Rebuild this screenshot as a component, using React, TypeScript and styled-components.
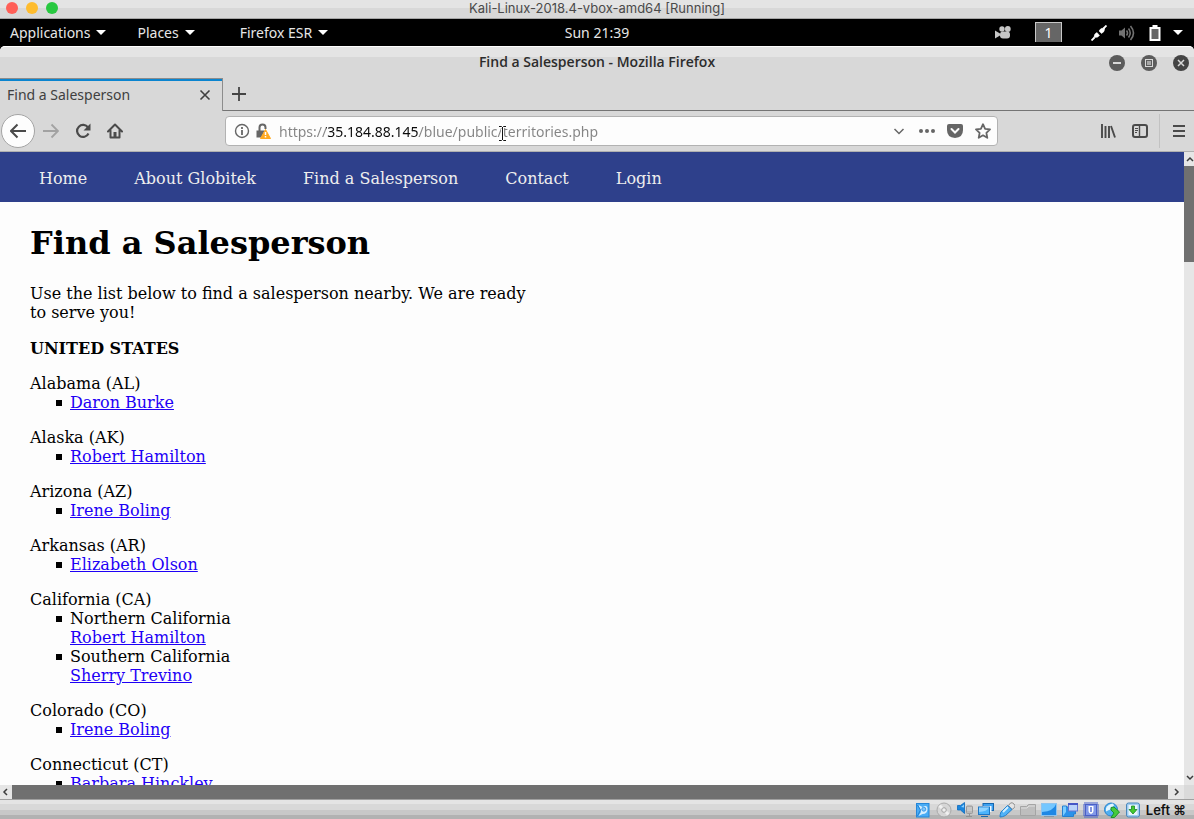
import React from "react";
import styled, { createGlobalStyle } from "styled-components";

const uiFont = `"Noto Sans", "Open Sans", sans-serif`;
const macFont = `Inter, Roboto, sans-serif`;

const GlobalStyle = createGlobalStyle`
  *, *::before, *::after { box-sizing: border-box; }
  body { margin: 0; background: #d8d8d8; }
  button { border: 0; padding: 0; background: none; color: inherit; font: inherit; }
  svg { display: block; flex: none; }
`;

const Shell = styled.div`
  display: flex;
  flex-direction: column;
  height: 100vh;
  overflow: hidden;
  font-family: ${uiFont};
  font-size: 14px;
`;

/* Host window title bar */
const HostBar = styled.header`
  display: grid;
  grid-template-columns: 1fr auto 1fr;
  align-items: center;
  flex: none;
  height: 19px;
  padding-bottom: 2px;
  border-bottom: 1px solid #a6a6a6;
  background: linear-gradient(#e4e4e4 8px, #d8d8d8 8px);
  color: #4a4a4a;
  font-family: ${macFont};
  font-size: 13px;
  line-height: 16px;
`;
const Lights = styled.div`
  display: flex;
  gap: 8px;
  padding-left: 6px;
`;
const Light = styled.button<{ $color: string }>`
  width: 12px;
  height: 12px;
  border-radius: 50%;
  background: ${(p) => p.$color};
`;

/* Desktop panel */
const Panel = styled.div`
  display: grid;
  grid-template-columns: 1fr auto 1fr;
  align-items: center;
  flex: none;
  height: 27px;
  background: #000;
  color: #e6e6e6;
  line-height: 20px;
`;
const PanelMenus = styled.div`
  display: flex;
  padding-left: 10px;
`;
const PanelMenu = styled.button<{ $gap?: number }>`
  display: flex;
  align-items: center;
  gap: 6px;
  margin-right: ${(p) => p.$gap ?? 0}px;
`;
const Caret = styled.span`
  border: 5px solid transparent;
  border-top-color: #fff;
  border-bottom-width: 0;
`;
const PanelTray = styled.div`
  display: flex;
  align-items: center;
  justify-content: flex-end;
  gap: 12px;
  padding-right: 11px;
`;
const PowerMenu = styled.button`
  display: flex;
  align-items: center;
  gap: 10px;
`;
const Workspace = styled.button`
  width: 27px;
  height: 21px;
  margin: 0 17px 0 12px;
  border: 1px solid #c8c8c8;
  background: #666;
  color: #fff;
  line-height: 19px;
`;

/* Browser window chrome */
const TitleBar = styled.div`
  display: grid;
  grid-template-columns: 1fr auto 1fr;
  align-items: center;
  flex: none;
  height: 32px;
  border-top: 1px solid #fff;
  border-radius: 5px 5px 0 0;
  background: linear-gradient(#e4e4e4 10px, #d8d8d8 10px);
  box-shadow: 0 -4px 0 #000;
  color: #2c2c2c;
  font-family: "Open Sans", sans-serif;
  font-weight: 600;
`;
const WindowTitle = styled.span`
  grid-column: 2;
  padding-bottom: 2px;
`;
const WindowButtons = styled.div`
  display: flex;
  justify-content: flex-end;
  gap: 16px;
  padding-right: 5px;
`;
const TabStrip = styled.div`
  display: flex;
  flex: none;
  height: 33px;
  background: #d8d8d8;
`;
const Tab = styled.div`
  display: flex;
  align-items: center;
  justify-content: space-between;
  width: 223px;
  padding: 0 11px 0 7px;
  border-top: 1px solid #8c8c8c;
  border-right: 1px solid #8c8c8c;
  box-shadow: inset 0 2px #0a84cf;
  color: #404040;
`;
const TabLabel = styled.span`
  padding-bottom: 2px;
`;
const TabRest = styled.div`
  display: flex;
  align-items: center;
  flex: 1;
  padding-left: 8px;
  border-bottom: 1px solid #747474;
`;
const Toolbar = styled.div`
  display: flex;
  align-items: center;
  flex: none;
  height: 41px;
  border-bottom: 1px solid #b0b0b0;
  background: #d8d8d8;
  color: #4a4a4a;
`;
const IconButton = styled.button<{ $width?: number }>`
  display: flex;
  align-items: center;
  justify-content: center;
  width: ${(p) => p.$width ?? 32}px;
  height: 28px;
`;
const BackButton = styled(IconButton)`
  height: 34px;
  margin-left: 1px;
  border: 1px solid #a4a4a4;
  border-radius: 50%;
  background: #fdfdfd;
`;
const Divider = styled.span`
  width: 1px;
  height: 34px;
  margin: 0 3px;
  background: #c2c2c2;
`;
const UrlField = styled.form`
  position: relative;
  display: flex;
  align-items: center;
  flex: 1;
  height: 30px;
  margin: 0 94px;
  padding-left: 8px;
  border: 1px solid #b2b2b2;
  border-radius: 4px;
  background: #fdfdfd;
  color: #666;
`;
const SiteIcons = styled.span`
  display: flex;
  gap: 5px;
  margin-right: 8px;
`;
/* The host part of the address is darker than its scheme and path. */
const UrlInput = styled.input`
  flex: 1;
  min-width: 0;
  height: 26px;
  padding: 0;
  border: 0;
  outline: 0;
  background: linear-gradient(90deg, #848484 47px, #0c0c0c 47px 140px, #848484 140px);
  background-clip: text;
  -webkit-background-clip: text;
  -webkit-text-fill-color: transparent;
  font-family: ${uiFont};
  font-size: 14px;
`;
const Pointer = styled.svg`
  position: absolute;
  left: 272px;
  top: 8px;
`;

/* Web page */
const Viewport = styled.div`
  display: grid;
  grid-template: minmax(0, 1fr) 14px / minmax(0, 1fr) 10px;
  flex: 1;
  min-height: 0;
`;
const Page = styled.main`
  overflow: hidden;
  background: #fdfdfd;
  color: #000;
  font-family: "DejaVu Serif", serif;
  font-size: 16px;
  line-height: 19px;
`;
const Nav = styled.nav`
  display: flex;
  align-items: center;
  gap: 47px;
  height: 50px;
  padding: 2px 39px 0;
  background: #2e408b;
`;
const NavLink = styled.a`
  color: #eee;
  text-decoration: none;
`;
const Content = styled.div`
  padding: 0 30px;
`;
const Heading = styled.h1`
  margin: 22px 0;
  font-size: 32px;
  line-height: 38px;
`;
const Intro = styled.p`
  width: 500px;
  max-width: 100%;
  margin: 0 0 17px;
`;
const Country = styled.h2`
  margin: 0 0 16px;
  font-size: 16px;
  line-height: 19px;
`;
const Territory = styled.section`
  margin-bottom: 16px;
`;
const People = styled.ul`
  margin: 0;
  padding-left: 40px;
  list-style: none;
`;
const Person = styled.li`
  &::before {
    content: "";
    display: inline-block;
    width: 6px;
    height: 6px;
    margin: 0 8px 2px -14px;
    background: #000;
  }
`;
const PersonLink = styled.a`
  color: #1e00f6;
`;
const VScroll = styled.div`
  display: flex;
  flex-direction: column;
  overflow: hidden;
  background: #e6e6e6;
`;
const VThumb = styled.div`
  height: 96px;
  margin-bottom: auto;
  background: #707070;
`;
const HScroll = styled.div`
  display: flex;
  background: #e6e6e6;
`;
const HThumb = styled.div`
  flex: 1;
  background: #707070;
`;
const ScrollButton = styled.button<{ $w: number }>`
  display: flex;
  align-items: center;
  justify-content: center;
  width: ${(p) => p.$w}px;
  height: 14px;
  color: #3c3c3c;
`;
const Corner = styled.div`
  background: #dadada;
`;

/* Virtual machine status bar */
const StatusBar = styled.footer`
  display: flex;
  align-items: center;
  justify-content: flex-end;
  gap: 5px;
  flex: none;
  height: 20px;
  padding-right: 8px;
  border-top: 1px solid #a0a0a0;
  background: linear-gradient(#e4e4e4 4px, #d8d8d8 4px 10px, #c8c8c8 10px 15px, #b2b2b2 15px);
  color: #111;
  font-family: ${macFont};
  font-size: 13px;
  font-weight: 600;
  line-height: 18px;
`;

type IconProps = { w?: number; h?: number; children: React.ReactNode; sw?: number };
const Icon = ({ w = 16, h = 16, sw = 2, children }: IconProps) => (
  <svg width={w} height={h} viewBox={`0 0 ${w} ${h}`} fill="none" stroke="currentColor" strokeWidth={sw} aria-hidden="true">
    {children}
  </svg>
);

const WindowButton = ({ label, fill, children }: { label: string; fill: string; children: React.ReactNode }) => (
  <button aria-label={label}>
    <svg width="16" height="16" viewBox="0 0 16 16" stroke="#d8d8d8" fill="none">
      <circle cx="8" cy="8" r="8" fill={fill} stroke="none" />
      {children}
    </svg>
  </button>
);

const StatusIcons = () => (
  <>
    <svg width="16" height="16" viewBox="0 0 16 16">
      <rect x="1.5" y="1.5" width="12.5" height="13.5" fill="#49acf5" stroke="#2586d8" />
      <path d="M3.500 3l4 2q5-3 5 2t-5 5l-4 2 2.500-4z" fill="#d6eeff" />
      <circle cx="8.800" cy="7.200" r="2" fill="#7cc4fb" stroke="#2b8de0" strokeWidth=".8" />
      <path d="M2.500 3l3 5-3 6" stroke="#1c7fd4" fill="none" />
    </svg>
    <svg width="16" height="16" viewBox="0 0 16 16">
      <circle cx="8" cy="8" r="7" fill="#d6d6d6" stroke="#aaa" />
      <path d="M8 8L3.500 3.500M8 8l4.500 4.500" stroke="#f0f0f0" strokeWidth="3" />
      <circle cx="8" cy="8" r="2.300" fill="#eee" stroke="#a2a2a2" />
    </svg>
    <svg width="16" height="16" viewBox="0 0 16 16">
      <path d="M.5 3.500h3l4-3v11l-4-3.500h-3z" fill="#1c86dd" stroke="#0d6abc" strokeWidth=".8" />
      <path d="M4 5l3-2.500v3z" fill="#8bd0ff" />
      <rect x="9.500" y="4" width="6" height="7.500" rx="1" fill="#b8b8b8" stroke="#9a9a9a" />
      <path d="M10 6h5M10 8h5" stroke="#d8d8d8" />
      <path d="M12.500 12v3M9 14.500h6" stroke="#929292" fill="none" />
    </svg>
    <svg width="16" height="16" viewBox="0 0 16 16">
      <rect x="5" y="1.500" width="10.500" height="7" fill="#3ea3f2" stroke="#1767af" />
      <rect x="4.500" y="4" width="9" height="6" fill="#eef7ff" />
      <rect x=".5" y="5" width="11" height="7.500" fill="#4bb4fb" stroke="#1e76c4" />
      <path d="M1 5.500h10q-2 4-10 4.500z" fill="#90d3ff" />
      <path d="M3 14.500h7" stroke="#1767af" />
    </svg>
    <svg width="16" height="16" viewBox="0 0 16 16">
      <path d="M9.500 3.500l2-2.500q1.500-1 3.500 1t.5 3.500l-2.500 2z" fill="#e4e4e4" stroke="#8e8e8e" />
      <path d="M2 10l6.500-6.500 4.500 4-6.500 6q-3 1.500-5.500 1.500 0-3 1-5z" fill="#4fb2f8" stroke="#2480cc" />
      <path d="M4 10l5-5" stroke="#d3efff" strokeWidth="1.800" />
    </svg>
    <svg width="16" height="16" viewBox="0 0 16 16">
      <path d="M.5 13.500v-9h6l2-2h7v11z" fill="#bebebe" stroke="#a4a4a4" />
      <path d="M1 6h6l2-2h6" stroke="#dedede" fill="none" />
    </svg>
    <svg width="16" height="16" viewBox="0 0 16 16">
      <rect x=".5" y="1.500" width="15" height="12" fill="#1e88e5" stroke="#8dc3ee" />
      <path d="M1 2h14q-2 7-14 8z" fill="#74c7ff" />
      <path d="M3 14.500h10" stroke="#8597a8" />
    </svg>
    <svg width="16" height="16" viewBox="0 0 16 16">
      <path d="M.5 14.500V4h4v1h9v7h-2v2.500z" fill="#2a92ea" stroke="#2480d0" />
      <path d="M1 14V4.500h3V10z" fill="#7accff" />
      <rect x="6.500" y="1.500" width="9" height="7.500" fill="#b9d3fa" stroke="#6674d0" />
      <path d="M6 2h10" stroke="#4657c6" strokeWidth="2" />
    </svg>
    <svg width="16" height="16" viewBox="0 0 16 16">
      <rect x="1.500" y="1.500" width="13" height="13" fill="none" stroke="#4a63cc" strokeWidth="3" strokeDasharray="1 1" />
      <rect x="2.500" y="2.500" width="11" height="11" fill="#8299e8" stroke="#4a5fc8" />
      <path d="M5.500 4v5q0 2 2.500 3 2.500-1 2.500-3V4z" fill="#fff" />
      <path d="M8 5v5" stroke="#5a70d4" strokeWidth="1.500" />
    </svg>
    <svg width="16" height="16" viewBox="0 0 16 16">
      <circle cx="7" cy="7.500" r="6.500" fill="#50aff1" stroke="#2a83cc" />
      <path d="M2 6q2-4 7-4.500l1 2-4 4-4 2z" fill="#e2f5ff" />
      <path d="M7 5.500l3-.5 5.500 5-5 5.500H7L10 11 7 8z" fill="#45cb3c" stroke="#158a26" strokeWidth=".9" />
    </svg>
    <svg width="16" height="16" viewBox="0 0 16 16">
      <rect x="1.500" y="1" width="13" height="14" rx="2" fill="#9fcdf2" stroke="#4a86ba" />
      <rect x="3.500" y="3" width="9" height="10" fill="#eaf5f9" />
      <path d="M6.500 4h3v3.500H12L8 12 4 7.500h2.500z" fill="#45c92e" stroke="#168528" strokeWidth=".8" />
    </svg>
  </>
);

type Entry = { region?: string; person: string };
const territories: { name: string; entries: Entry[] }[] = [
  { name: "Alabama (AL)", entries: [{ person: "Daron Burke" }] },
  { name: "Alaska (AK)", entries: [{ person: "Robert Hamilton" }] },
  { name: "Arizona (AZ)", entries: [{ person: "Irene Boling" }] },
  { name: "Arkansas (AR)", entries: [{ person: "Elizabeth Olson" }] },
  {
    name: "California (CA)",
    entries: [
      { region: "Northern California", person: "Robert Hamilton" },
      { region: "Southern California", person: "Sherry Trevino" },
    ],
  },
  { name: "Colorado (CO)", entries: [{ person: "Irene Boling" }] },
  { name: "Connecticut (CT)", entries: [{ person: "Barbara Hinckley" }] },
];

const navItems = ["Home", "About Globitek", "Find a Salesperson", "Contact", "Login"];

export default function App() {
  return (
    <Shell>
      <GlobalStyle />
      <HostBar>
        <Lights>
          <Light $color="#ff5f57" aria-label="Close" />
          <Light $color="#febc2e" aria-label="Minimize" />
          <Light $color="#28c840" aria-label="Zoom" />
        </Lights>
        <span>Kali-Linux-2018.4-vbox-amd64 [Running]</span>
      </HostBar>

      <Panel>
        <PanelMenus>
          <PanelMenu $gap={31}>Applications <Caret /></PanelMenu>
          <PanelMenu $gap={45}>Places <Caret /></PanelMenu>
          <PanelMenu>Firefox ESR <Caret /></PanelMenu>
        </PanelMenus>
        <span>Sun 21:39</span>
        <PanelTray>
          <svg width="16" height="14" viewBox="0 0 16 14" fill="#c6c6c6">
            <path d="M0 4.500l5 3v2l-5 3z" />
            <circle cx="7" cy="3" r="2.700" />
            <circle cx="12.800" cy="3" r="2.900" />
            <rect x="5" y="5.500" width="10" height="7" rx="3" />
          </svg>
          <Workspace>1</Workspace>
          <svg width="16" height="16" viewBox="0 0 16 16" fill="#fff" stroke="#fff">
            <path d="M.5 15.500l3-3M12.500 3.500l3-3" strokeWidth="1.800" />
            <path d="M3 12.500q0-4 3-5l2.500 3q-1.500 2.500-5.500 2zM8 6q1.500-3.500 5.500-3 .5 4-3 5.500z" strokeWidth=".5" />
          </svg>
          <svg width="16" height="16" viewBox="0 0 16 16" fill="none" stroke="#727272" strokeWidth="1.600">
            <path d="M0 5.500h2.500L6 2.500v11L2.500 10.500H0z" fill="#727272" stroke="none" />
            <path d="M7.500 5.500q2 2.500 0 5M9.500 3.500q3.500 4.500 0 9M11.500 1q6 7 0 14" />
          </svg>
          <PowerMenu aria-label="System menu">
            <svg width="16" height="16" viewBox="0 0 16 16">
              <path d="M5.500 0h5v2h3v14h-11V2h3z" fill="#fff" />
              <path d="M4.500 4h7v10h-7z" fill="#666" />
            </svg>
            <Caret />
          </PowerMenu>
        </PanelTray>
      </Panel>

      <TitleBar>
        <WindowTitle>Find a Salesperson - Mozilla Firefox</WindowTitle>
        <WindowButtons>
          <WindowButton label="Minimize window" fill="#5c5c5c"><path d="M4 8h8" strokeWidth="2" /></WindowButton>
          <WindowButton label="Maximize window" fill="#5c5c5c">
            <rect x="4.500" y="4.500" width="7" height="7" /><rect x="6" y="6" width="4" height="4" fill="#a8a8a8" stroke="none" />
          </WindowButton>
          <WindowButton label="Close window" fill="#444"><path d="M5 5l6 6M11 5l-6 6" strokeWidth="1.500" /></WindowButton>
        </WindowButtons>
      </TitleBar>

      <TabStrip>
        <Tab>
          <TabLabel>Find a Salesperson</TabLabel>
          <button aria-label="Close tab">
            <Icon w={12} h={12} sw={1.6}><path d="M1.500 1.500l9 9M10.500 1.500l-9 9" /></Icon>
          </button>
        </Tab>
        <TabRest>
          <button aria-label="New tab">
            <Icon><path d="M8 1v14M1 8h14" stroke="#444" strokeWidth="1.800" /></Icon>
          </button>
        </TabRest>
      </TabStrip>

      <Toolbar>
        <BackButton $width={34} aria-label="Back">
          <Icon><path d="M16 8H1.500M7.500 1.500L1 8l6.500 6.500" /></Icon>
        </BackButton>
        <IconButton aria-label="Forward">
          <Icon><path d="M0 8h14.500M8.500 1.500L15 8l-6.500 6.500" stroke="#a2a2a2" strokeWidth="1.800" /></Icon>
        </IconButton>
        <IconButton aria-label="Reload">
          <Icon>
            <path d="M13 4.500A6 6 0 1 0 13.500 10.500" strokeWidth="2.200" />
            <path d="M15.500.5v7h-7z" fill="currentColor" stroke="none" />
          </Icon>
        </IconButton>
        <IconButton aria-label="Home page">
          <Icon>
            <path d="M1 8.500L8 1.500l7 7M3.500 7.500v7h9v-7" strokeLinecap="round" strokeLinejoin="round" />
            <path d="M6.500 9h3v5.500h-3z" fill="currentColor" stroke="none" />
          </Icon>
        </IconButton>
        <UrlField onSubmit={(e) => e.preventDefault()}>
          <SiteIcons>
            <Icon sw={1.4}><circle cx="8" cy="8" r="6.500" /><path d="M8 7v5M8 4v2" strokeWidth="1.800" /></Icon>
            <Icon>
              <path d="M4.500 8V4.500q0-3 3-3t3 3V6" />
              <path d="M1.500 7.500h8l-3 7h-5z" fill="currentColor" stroke="none" />
              <path d="M10.500 6.500l5 9h-10z" fill="#ffa91f" stroke="#ffa91f" strokeWidth="1" strokeLinejoin="round" />
              <path d="M10.500 9v3M10.500 13v1.500" stroke="#fff" strokeWidth="1.500" />
            </Icon>
          </SiteIcons>
          <UrlInput aria-label="Address" defaultValue="https://35.184.88.145/blue/public/territories.php" />
          <IconButton $width={29} type="button" aria-label="Show history">
            <Icon sw={1.5}><path d="M3.500 6L8 10.500 12.500 6" /></Icon>
          </IconButton>
          <IconButton $width={28} type="button" aria-label="Page actions">
            <Icon><g fill="currentColor" stroke="none"><circle cx="2" cy="8" r="2" /><circle cx="8" cy="8" r="2" /><circle cx="14" cy="8" r="2" /></g></Icon>
          </IconButton>
          <IconButton $width={28} type="button" aria-label="Save to Pocket">
            <Icon>
              <path d="M2 1h12q2 0 2 2v4q0 7.500-8 8-8-.5-8-8V3q0-2 2-2z" fill="currentColor" stroke="none" />
              <path d="M4.500 6L8 9.500 11.500 6" stroke="#fdfdfd" strokeLinecap="round" />
            </Icon>
          </IconButton>
          <IconButton $width={28} type="button" aria-label="Bookmark this page">
            <Icon sw={1.8}><path d="M8 1.200l2.100 4.600 4.900.6-3.600 3.400.9 5L8 12.300l-4.300 2.500.9-5L1 6.400l4.900-.6z" strokeLinejoin="round" /></Icon>
          </IconButton>
          <Pointer width="9" height="17" viewBox="0 0 9 17" fill="none" aria-hidden="true">
            <path d="M1 1.500h2.500l1 1 1-1H8M4.500 2v13M1 15.500h2.500l1-1 1 1H8" stroke="#fff" strokeWidth="3" />
            <path d="M1 1.500h2.500l1 1 1-1H8M4.500 2v13M1 15.500h2.500l1-1 1 1H8" stroke="#111" />
          </Pointer>
        </UrlField>
        <IconButton aria-label="Library">
          <Icon><path d="M2 1v14M5.500 3v12M9 3v12M11 3l4 11.500" strokeWidth="1.900" /></Icon>
        </IconButton>
        <IconButton aria-label="Sidebars">
          <Icon>
            <rect x="1" y="2" width="14" height="12" rx="2" />
            <path d="M7.500 2v12" strokeWidth="1.400" /><path d="M3 5.500h3M3 7.500h3M3 9.500h2" strokeWidth="1" />
          </Icon>
        </IconButton>
        <Divider />
        <IconButton $width={31} aria-label="Open menu">
          <Icon><path d="M2 3h12M2 8h12M2 13h12" /></Icon>
        </IconButton>
      </Toolbar>

      <Viewport>
        <Page>
          <Nav>
            {navItems.map((item) => (
              <NavLink key={item} href="#">{item}</NavLink>
            ))}
          </Nav>
          <Content>
            <Heading>Find a Salesperson</Heading>
            <Intro>Use the list below to find a salesperson nearby. We are ready to serve you!</Intro>
            <Country>UNITED STATES</Country>
            {territories.map((t) => (
              <Territory key={t.name}>
                {t.name}
                <People>
                  {t.entries.map((e) => (
                    <Person key={e.person}>
                      {e.region && <>{e.region}<br /></>}
                      <PersonLink href="#">{e.person}</PersonLink>
                    </Person>
                  ))}
                </People>
              </Territory>
            ))}
          </Content>
        </Page>
        <VScroll>
          <ScrollButton $w={12} aria-label="Scroll up"><Icon w={8} h={8} sw={1.5}><path d="M1 6l3-3 3 3" /></Icon></ScrollButton>
          <VThumb />
          <ScrollButton $w={12} aria-label="Scroll down"><Icon w={8} h={8} sw={1.5}><path d="M1 2l3 3 3-3" /></Icon></ScrollButton>
        </VScroll>
        <HScroll>
          <ScrollButton $w={12} aria-label="Scroll left"><Icon w={8} h={8} sw={1.5}><path d="M5 1L2 4l3 3" /></Icon></ScrollButton>
          <HThumb />
          <ScrollButton $w={16} aria-label="Scroll right"><Icon w={8} h={8} sw={1.5}><path d="M3 1l3 3-3 3" /></Icon></ScrollButton>
        </HScroll>
        <Corner />
      </Viewport>

      <StatusBar>
        <StatusIcons />
        <span>Left ⌘</span>
      </StatusBar>
    </Shell>
  );
}
